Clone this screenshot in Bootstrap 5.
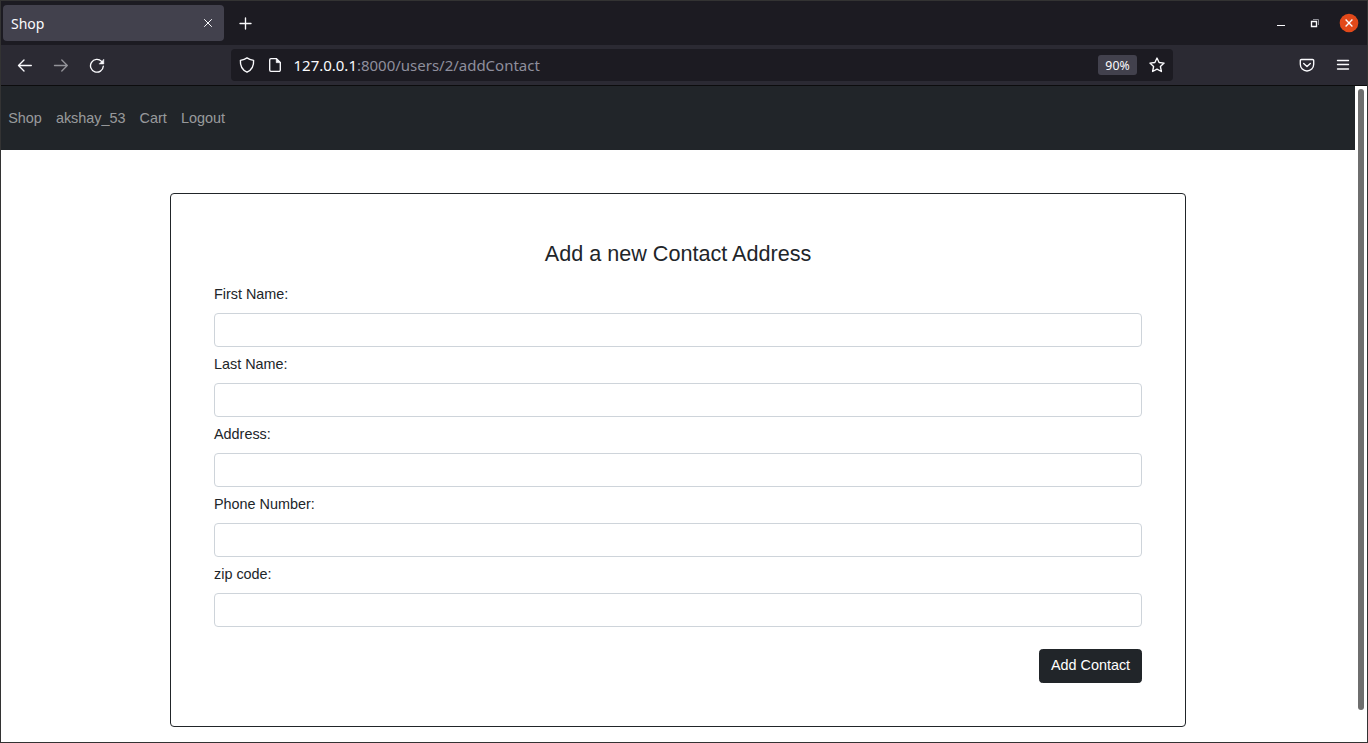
<!DOCTYPE html>
<html lang="en">
<head>
<meta charset="utf-8">
<meta name="viewport" content="width=device-width, initial-scale=1">
<title>Shop</title>
<link rel="stylesheet" href="https://cdn.jsdelivr.net/npm/bootstrap@5.3.0/dist/css/bootstrap.min.css">
<style>
body{font-family:"Liberation Sans",Arial,sans-serif;font-size:14.4px;line-height:22px;color:#212529}
.window{height:743px;border:1px solid #333;background:#fff}
.chrome-ui{font-family:"Noto Sans",sans-serif;color:#fbfbfe}
.chrome-ui svg{display:block;flex:none;fill:none;stroke:#fbfbfe;stroke-width:1.35;stroke-linecap:round;stroke-linejoin:round}
.tabstrip{height:44px;background:#1c1b22;padding:0 8px 0 2px}
.tab-item{width:221px;height:36px;background:#42414d;border-radius:4px;padding:0 8px;font-size:14px}
.tab-item svg{stroke-width:1}
.tab-item span{padding-top:1px}
.new-tab{margin-left:14px}
.chrome-ui .win-controls{stroke-linecap:butt;stroke-linejoin:miter}
.win-controls .thin{stroke-width:1}
.win-controls .behind{stroke:#8f8f96;stroke-width:1}
.win-controls .close-disc{fill:#e2491a;stroke:none}
.toolbar{height:41px;background:#2b2a33;border-bottom:1px solid #0c0c0d;padding:0 16px}
.toolbar .gap-20{margin-left:20px}
.toolbar .solid{fill:#fbfbfe;stroke-width:.5}
.urlbar{width:942px;height:32px;background:#1c1b22;border-radius:4px;padding:0 8px;margin-left:126px}
.urlbar .gap-12{margin-left:12px}
.url-text{font-size:15px;color:#8f8f9d;margin-left:10.5px;white-space:nowrap;letter-spacing:-.01px}
.url-text b{font-weight:400;color:#fbfbfe}
.zoom-pill{width:39px;height:20px;background:#42414d;border-radius:3px;font-size:12.3px;line-height:21px}
.page-nav{height:64px;padding:0 7.2px;gap:14.1px}
.page-nav .nav-link{color:rgba(255,255,255,.55);padding:0;line-height:22px}
.track{width:12px;padding:3px}
.thumb{width:6px;height:621px;background:#6e6e6e;border-radius:3px}
.form-box{width:1016px;height:534px;border:1px solid #212529;border-radius:4px;margin-top:43px;padding:43px}
.form-box h1{font-size:21.6px;font-weight:400;line-height:34px;margin:0 0 12px}
.form-box label{line-height:22px;margin-bottom:8px;display:block}
.form-box .form-control{height:34px;border-color:#ced4da;border-radius:4px;font-size:14.4px}
.field{margin-bottom:6px}
.submit{width:103px;height:34px;margin-top:16px;border-radius:3.6px;font-size:14.4px;padding:0 0 2px;line-height:30px}
</style>
</head>
<body>
<div class="window d-flex flex-column overflow-hidden">
  <header class="chrome-ui">
    <div class="tabstrip d-flex align-items-center">
      <div class="tab-item d-flex align-items-center justify-content-between"><span>Shop</span>
        <svg width="16" height="16" viewBox="0 0 16 16"><path d="M4.500 4.500l7 7M11.500 4.500l-7 7"/></svg></div>
      <svg class="new-tab" width="16" height="16" viewBox="0 0 16 16"><path d="M7.500 3v11M2 8.500h11"/></svg>
      <svg class="win-controls ms-auto" width="86" height="20" viewBox="0 0 86 20">
        <path class="thin" d="M4 12.500h8"/>
        <path d="M38.500 8.500h5v5h-5z"/><path class="behind" d="M40 6.500h5.500V12"/>
        <circle class="close-disc" cx="76" cy="10" r="9.300"/><path d="M72.600 6.600l6.800 6.800M79.400 6.600l-6.800 6.800"/>
      </svg>
    </div>
    <div class="toolbar d-flex align-items-center">
      <svg width="16" height="16" viewBox="0 0 16 16"><path d="M14.300 8.500H1.500M7 3L1.500 8.500 7 14"/></svg>
      <svg class="gap-20 opacity-50" width="16" height="16" viewBox="0 0 16 16"><path d="M1.500 8.500h12.800M8.800 3l5.500 5.500L8.800 14"/></svg>
      <svg class="gap-20" width="16" height="16" viewBox="0 0 16 16"><path d="M14.300 9.200A6.400 6.400 0 1 1 12.600 4.400"/><path class="solid" d="M14.800 2.500v4.500h-4.500z"/></svg>
      <div class="urlbar d-flex align-items-center">
        <svg width="16" height="16" viewBox="0 0 16 16"><path d="M8 .9C6 2.500 3.600 3 1.400 3.300 1 9.500 3.700 13.300 8 15.200c4.300-1.900 7-5.700 6.600-11.900C12.400 3 10 2.500 8 .9z"/></svg>
        <svg class="gap-12" width="16" height="16" viewBox="0 0 16 16"><path d="M9.500 1.600H4A1.300 1.300 0 0 0 2.700 2.900v10.200A1.300 1.300 0 0 0 4 14.400h8a1.300 1.300 0 0 0 1.300-1.300V5.500z"/><path class="solid" d="M9.200 1.600v4.100h4.100z"/></svg>
        <span class="url-text"><b>127.0.0.1</b>:8000/users/2/addContact</span>
        <span class="zoom-pill text-center ms-auto">90%</span>
        <svg class="gap-12" width="16" height="16" viewBox="0 0 16 16"><path d="M8 1l2.100 4.500 5 .6-3.700 3.400 1 5L8 12.100l-4.400 2.400 1-5L.9 6.100l5-.6z"/></svg>
      </div>
      <svg class="ms-auto" width="16" height="16" viewBox="0 0 16 16"><path d="M2.500 2.500h11a1.200 1.200 0 0 1 1.200 1.200V7.300a6.700 6.700 0 0 1-13.400 0V3.700a1.200 1.200 0 0 1 1.200-1.200zM4.700 6.500L8 9.600l3.300-3.100"/></svg>
      <svg class="gap-20" width="16" height="16" viewBox="0 0 16 16"><path d="M2.500 3.500h11M2.500 7.500h11M2.500 12h11"/></svg>
    </div>
  </header>
  <div class="d-flex flex-grow-1">
    <main class="flex-grow-1">
      <nav class="page-nav bg-dark d-flex align-items-center">
        <a class="nav-link" href="#">Shop</a><a class="nav-link" href="#">akshay_53</a><a class="nav-link" href="#">Cart</a><a class="nav-link" href="#">Logout</a>
      </nav>
      <form class="form-box mx-auto">
        <h1 class="text-center">Add a new Contact Address</h1>
        <div class="field"><label for="f1">First Name:</label><input id="f1" class="form-control"></div>
        <div class="field"><label for="f2">Last Name:</label><input id="f2" class="form-control"></div>
        <div class="field"><label for="f3">Address:</label><input id="f3" class="form-control"></div>
        <div class="field"><label for="f4">Phone Number:</label><input id="f4" class="form-control"></div>
        <div class="field"><label for="f5">zip code:</label><input id="f5" class="form-control"></div>
        <div class="d-flex justify-content-end"><button type="button" class="btn btn-dark submit">Add Contact</button></div>
      </form>
    </main>
    <div class="track"><div class="thumb"></div></div>
  </div>
</div>
<script src="https://cdn.jsdelivr.net/npm/bootstrap@5.3.0/dist/js/bootstrap.bundle.min.js"></script>
</body>
</html>
